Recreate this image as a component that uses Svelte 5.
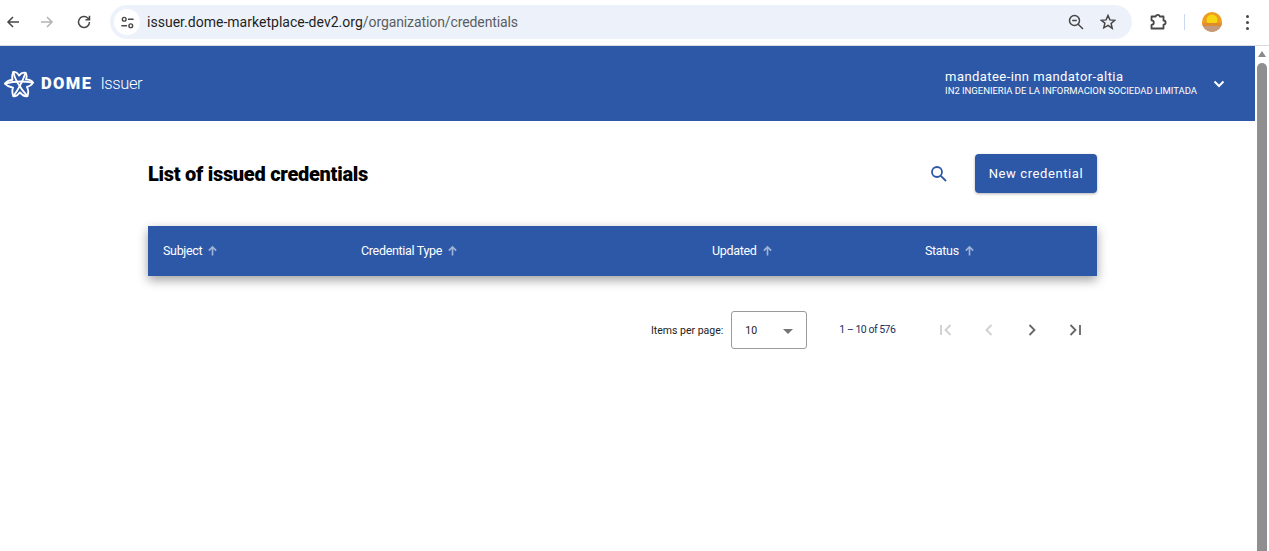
<script>
  const columns = [
    { label: 'Subject', width: 198 },
    { label: 'Credential Type', width: 351 },
    { label: 'Updated', width: 213 },
    { label: 'Status', width: 0 }
  ];
</script>

<div class="browser">
  <div class="chrome">
    <div class="nav">
      <svg class="nav-icon" viewBox="0 0 16 16"><path d="M14 8H3M8 3 3 8l5 5" /></svg>
      <svg class="nav-icon off" viewBox="0 0 16 16"><path d="M2 8h11M8 3l5 5-5 5" /></svg>
      <svg class="nav-icon reload" viewBox="0 0 16 16"><path d="M13.500 8A5.500 5.500 0 1 1 11.800 4L13.500 5.600M13.500 1.800v4h-4" /></svg>
    </div>
    <div class="omnibox">
      <span class="site-btn">
        <svg viewBox="0 0 16 16"><circle cx="4.500" cy="4.500" r="2" /><path d="M8.500 4.500h6M1.500 11.500h6" /><circle cx="11.500" cy="11.500" r="2" /></svg>
      </span>
      <span class="url"><b>issuer.dome-marketplace-dev2.org</b>/organization/credentials</span>
      <svg class="omni-icon zoom" viewBox="0 0 16 16"><circle cx="6.500" cy="6.500" r="5" /><path d="M10.200 10.200 15 15M4.200 6.500h4.600" /></svg>
      <svg class="omni-icon star" viewBox="0 0 16 16"><path d="M8 1.500l1.900 4.400 4.800.4-3.600 3.200 1.100 4.700L8 11.300l-4.200 2.500 1.100-4.700L1.300 6.300l4.800-.4z" /></svg>
    </div>
    <svg class="ext" viewBox="0 0 18 18"><path d="M2.500 3.500h4.200a2.100 2.100 0 0 1 4.100 0h3.700v4a2.100 2.100 0 0 1 0 4.200v3.800H2.500v-3.600a2.200 2.200 0 0 0 0-4.600z" stroke-linejoin="round" /></svg>
    <span class="divider"></span>
    <svg class="avatar" viewBox="0 0 20 20">
      <defs><clipPath id="round"><circle cx="10" cy="10" r="10" /></clipPath></defs>
      <g clip-path="url(#round)">
        <rect width="20" height="20" fill="#ee9d1c" />
        <circle cx="10" cy="8" r="5.500" fill="#f6d514" />
        <rect y="11" width="20" height="3" fill="#e08a2e" />
        <rect y="14" width="20" height="6" fill="#c29a80" />
      </g>
    </svg>
    <span class="kebab"><i></i><i></i><i></i></span>
  </div>

  <div class="viewport">
    <div class="page">
      <header class="topbar">
        <div class="brand">
          <svg class="logo" viewBox="0 0 32 30">
            <path d="M10 2Q14 2 16 6 19 2 23 3 25 6 23.500 10 29 10 31 13.500 29 17 24.500 18 27 23 25 28 21 29 17 24 13 29 10 28 8 24 9.500 19 4 18 1 14.500 4 11 9 10.500 8 6 10 2Z" />
            <path d="M10 2C11 10 18 20 25 28" />
            <path d="M23 3C20 12 16 20 10 28" />
            <path d="M1 14.500C10 12 22 12 31 13.500" />
          </svg>
          <span class="dome">DOME</span>
          <span class="issuer">Issuer</span>
        </div>
        <div class="user">
          <div class="user-text">
            <div class="user-name">mandatee-inn mandator-altia</div>
            <div class="user-org">IN2 INGENIERIA DE LA INFORMACION SOCIEDAD LIMITADA</div>
          </div>
          <svg class="chevron" viewBox="0 0 12 8"><path d="M1.500 1.500 6 6l4.500-4.500" /></svg>
        </div>
      </header>

      <main class="content">
        <div class="title-row">
          <h1>List of issued credentials</h1>
          <svg class="search" viewBox="0 0 18 18"><circle cx="7" cy="7" r="5" /><path d="M10.800 10.800 16 16" /></svg>
          <button class="new-btn">New credential</button>
        </div>

        <div class="table-head">
          {#each columns as col}
            <div class="th" style={col.width ? `width: ${col.width}px` : ''}>
              <span>{col.label}</span>
              <svg class="sort" viewBox="0 0 12 12"><path d="M6 11V1.800M2 5.500 6 1.500l4 4" /></svg>
            </div>
          {/each}
        </div>

        <div class="paginator">
          <span class="per-page">Items per page:</span>
          <div class="select">
            <span>10</span>
            <span class="caret"></span>
          </div>
          <span class="range">1 – 10 of 576</span>
          <div class="pager">
            <svg class="off" viewBox="0 0 14 14"><path d="M2 2v10M11.500 2l-5 5 5 5" /></svg>
            <svg class="off" viewBox="0 0 14 14"><path d="M9.500 2l-5 5 5 5" /></svg>
            <svg viewBox="0 0 14 14"><path d="M4.500 2l5 5-5 5" /></svg>
            <svg viewBox="0 0 14 14"><path d="M2.500 2l5 5-5 5M12 2v10" /></svg>
          </div>
        </div>
      </main>
    </div>

    <div class="scrollbar">
      <span class="arrow"></span>
      <span class="thumb"></span>
    </div>
  </div>
</div>

<style>
  :global(body) {
    margin: 0;
    overflow: hidden;
    background: #fff;
  }

  .browser {
    width: 1269px;
    height: 551px;
    display: flex;
    flex-direction: column;
    overflow: hidden;
    font-family: Roboto, "Liberation Sans", sans-serif;
  }

  .chrome {
    height: 46px;
    box-sizing: border-box;
    border-bottom: 1px solid #d9dce1;
    flex: none;
    display: flex;
    align-items: flex-start;
    background: #fff;
    padding-top: 5px;
  }

  .nav {
    display: flex;
    gap: 18px;
    padding: 9px 0 0 5px;
    width: 105px;
    box-sizing: border-box;
  }

  .nav-icon {
    width: 16px;
    height: 16px;
    fill: none;
    stroke: #474747;
    stroke-width: 1.500;
  }

  .nav-icon.off {
    stroke: #b0b2b5;
  }

  .nav-icon.reload {
    margin-left: 3px;
  }

  .omnibox {
    width: 1022px;
    height: 34px;
    background: #edf2fa;
    border-radius: 17px;
    display: flex;
    align-items: center;
    box-sizing: border-box;
    padding-left: 4px;
    margin-left: 5px;
  }

  .site-btn {
    width: 26px;
    height: 26px;
    border-radius: 50%;
    background: #fff;
    display: flex;
    align-items: center;
    justify-content: center;
    flex: none;
  }

  .site-btn svg {
    width: 15px;
    height: 15px;
    fill: none;
    stroke: #474747;
    stroke-width: 1.500;
  }

  .url {
    margin-left: 7px;
    flex: 1;
    font-size: 14px;
    color: #5a5d61;
    letter-spacing: -0.100px;
  }

  .url b {
    font-weight: 400;
    color: #1f1f1f;
    letter-spacing: 0.020px;
  }

  .omni-icon {
    width: 16px;
    height: 16px;
    fill: none;
    stroke: #474747;
    stroke-width: 1.500;
  }

  .zoom {
    margin-right: 16px;
  }

  .star {
    margin-right: 16px;
  }

  .ext {
    width: 18px;
    height: 18px;
    margin: 8px 0 0 17px;
    fill: none;
    stroke: #474747;
    stroke-width: 1.800;
  }

  .divider {
    width: 1px;
    height: 16px;
    background: #c9d8f0;
    margin: 9px 0 0 17px;
  }

  .avatar {
    width: 20px;
    height: 20px;
    margin: 7px 0 0 17px;
  }

  .kebab {
    display: flex;
    flex-direction: column;
    gap: 3px;
    margin: 10px 0 0 24px;
  }

  .kebab i {
    width: 3px;
    height: 3px;
    border-radius: 50%;
    background: #474747;
  }

  .viewport {
    flex: 1;
    display: flex;
    min-height: 0;
  }

  .page {
    flex: 1;
    min-width: 0;
    background: #fff;
  }

  .topbar {
    height: 75px;
    background: #2d58a7;
    color: #fff;
    display: flex;
    align-items: center;
    justify-content: space-between;
    padding: 0 30px 0 4px;
  }

  .brand {
    display: flex;
    align-items: center;
  }

  .logo {
    width: 30px;
    height: 28px;
    fill: none;
    stroke: #fff;
    stroke-width: 2;
    stroke-linecap: round;
    stroke-linejoin: round;
  }

  .dome {
    margin-left: 7px;
    font-size: 16.500px;
    font-weight: 900;
    letter-spacing: 1.400px;
  }

  .issuer {
    margin-left: 8px;
    font-size: 16.500px;
    font-weight: 300;
    letter-spacing: -0.400px;
  }

  .user {
    display: flex;
    align-items: center;
  }

  .user-text {
    margin-right: 16px;
  }

  .user-name {
    font-size: 13px;
    line-height: 14px;
    letter-spacing: 0.430px;
  }

  .user-org {
    font-size: 9.500px;
    line-height: 13px;
    letter-spacing: -0.030px;
  }

  .chevron {
    width: 12px;
    height: 8px;
    fill: none;
    stroke: #fff;
    stroke-width: 2;
  }

  .content {
    width: 949px;
    margin-left: 148px;
  }

  .title-row {
    display: flex;
    align-items: center;
    padding-top: 33px;
    height: 39px;
  }

  h1 {
    margin: 0;
    flex: 1;
    font-size: 20px;
    font-weight: 900;
    color: #000;
    letter-spacing: -0.280px;
  }

  .search {
    width: 18px;
    height: 18px;
    margin-right: 27px;
    fill: none;
    stroke: #2d58a7;
    stroke-width: 1.800;
  }

  .new-btn {
    width: 122px;
    height: 39px;
    border: none;
    border-radius: 4px;
    background: #2d58a7;
    color: #fff;
    font: 400 13px Roboto, sans-serif;
    letter-spacing: 0.600px;
    box-shadow: 0 1px 3px rgba(0, 0, 0, 0.3);
    padding: 0;
  }

  .table-head {
    margin-top: 33px;
    height: 50px;
    background: #2d58a7;
    color: #fff;
    display: flex;
    align-items: center;
    padding-left: 15px;
    font-size: 12.500px;
    letter-spacing: -0.320px;
    box-shadow: 0 4px 10px rgba(0, 0, 0, 0.38);
  }

  .th {
    display: flex;
    align-items: center;
    gap: 5px;
  }

  .th span {
    position: relative;
    top: -1px;
  }

  .sort {
    width: 11px;
    height: 12px;
    fill: none;
    stroke: rgba(255, 255, 255, 0.55);
    stroke-width: 1.800;
  }

  .paginator {
    display: flex;
    align-items: center;
    margin-top: 35px;
    font-size: 10.500px;
    color: #222;
    padding-left: 503px;
  }

  .select {
    width: 76px;
    height: 38px;
    box-sizing: border-box;
    border: 1px solid #9a9a9a;
    border-radius: 3px;
    margin-left: 8px;
    display: flex;
    align-items: center;
    justify-content: space-between;
    padding: 0 13px 0 13px;
  }

  .caret {
    width: 0;
    height: 0;
    border-left: 5px solid transparent;
    border-right: 5px solid transparent;
    border-top: 5px solid #757575;
    margin-top: 2px;
  }

  .range {
    margin-left: 32px;
    color: #17305f;
    margin-top: -2px;
    letter-spacing: -0.480px;
  }

  .pager {
    display: flex;
    gap: 29px;
    margin-left: 44px;
  }

  .pager svg {
    width: 14px;
    height: 14px;
    fill: none;
    stroke: #666;
    stroke-width: 1.800;
  }

  .pager svg.off {
    stroke: #cfcfcf;
  }

  .scrollbar {
    width: 14px;
    flex: none;
    background: #fff;
    display: flex;
    flex-direction: column;
    align-items: center;
  }

  .arrow {
    width: 0;
    height: 0;
    border-left: 4.500px solid transparent;
    border-right: 4.500px solid transparent;
    border-bottom: 6px solid #8a8a8a;
    margin-top: 5px;
  }

  .thumb {
    width: 10px;
    flex: 1;
    margin-top: 6px;
    background: #8f8f8f;
    border-radius: 5px 5px 0 0;
  }
</style>
